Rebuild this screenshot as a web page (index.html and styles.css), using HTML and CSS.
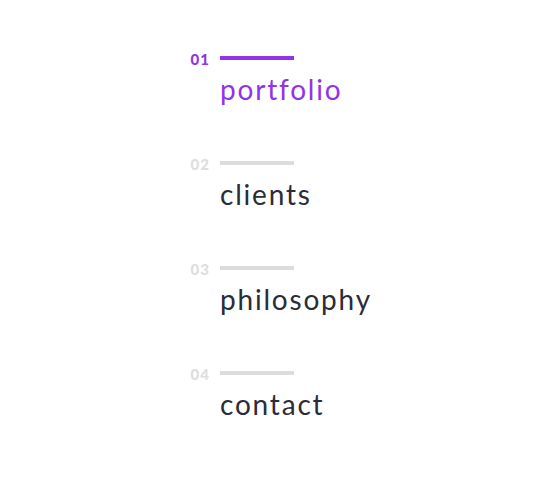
FILE: index.html
```html
<!DOCTYPE html>
<html lang="en">
  <head>
    <meta charset="UTF-8" />
    <meta name="viewport" content="width=device-width, initial-scale=1.0" />
    <title>Menu</title>
    <link rel="stylesheet" href="styles.css">
  </head>
  <body>
    <nav class="menu">
      <a class="menu-item active" href="#portfolio">
        <span class="num">01</span>
        <span class="bar"></span>
        <span class="label">portfolio</span>
      </a>
      <a class="menu-item" href="#clients">
        <span class="num">02</span>
        <span class="bar"></span>
        <span class="label">clients</span>
      </a>
      <a class="menu-item" href="#philosophy">
        <span class="num">03</span>
        <span class="bar"></span>
        <span class="label">philosophy</span>
      </a>
      <a class="menu-item" href="#contact">
        <span class="num">04</span>
        <span class="bar"></span>
        <span class="label">contact</span>
      </a>
    </nav>
  </body>
</html>
```

FILE: styles.css
```css
body {
  margin: 0;
  padding: 0;
  background-color: #fff;
  font-family: 'Lato', sans-serif;
}

.menu {
  display: flex;
  flex-direction: column;
  gap: 49px;
  padding: 50px 0 0 180px;
}

.menu-item {
  display: grid;
  grid-template-columns: 30px 74px;
  column-gap: 10px;
  row-gap: 6px;
  align-items: center;
  text-decoration: none;
  color: #2a2c39;
}

.num {
  text-align: right;
  font-size: 15px;
  font-weight: 900;
  line-height: 14px;
  letter-spacing: 1px;
  padding-top: 2px;
  color: #dedede;
}

.bar {
  height: 4px;
  background-color: #dcdcdc;
}

.label {
  grid-column: 2;
  white-space: nowrap;
  font-size: 28px;
  line-height: 34px;
  letter-spacing: 1.8px;
}

/* 目前選取的項目 */
.active .num,
.active .label {
  color: #9233ea;
}

.active .bar {
  background-color: #9233ea;
}
```
